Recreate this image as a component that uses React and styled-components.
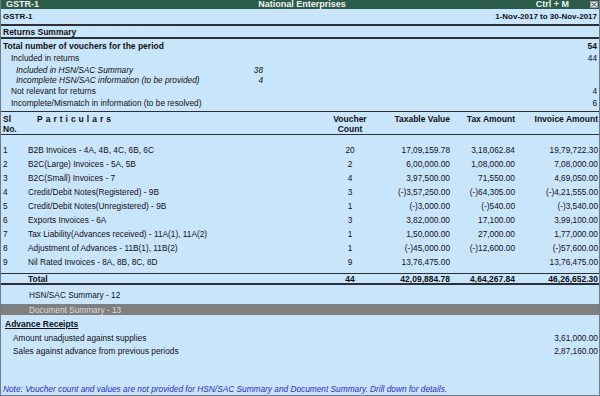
import React from "react";
import styled, { createGlobalStyle } from "styled-components";

const GlobalStyle = createGlobalStyle`
  html, body { margin: 0; padding: 0; background: #c9e5fb; }
  body { font-family: "Liberation Sans", Arial, sans-serif; color: #111; }
  * { box-sizing: border-box; }
`;

const Window = styled.div`
  width: 600px;
  height: 396px;
  display: flex;
  flex-direction: column;
  background: #c9e5fb;
  border-left: 1px solid #6d7b86;
  border-right: 1px solid #6d7b86;
  border-bottom: 1px solid #6d7b86;
  overflow: hidden;
`;

const TitleBar = styled.div`
  height: 9px;
  background: #2b5b49;
  color: #f2f2f2;
  font-weight: bold;
  font-size: 9px;
  line-height: 9px;
  display: grid;
  grid-template-columns: 1fr auto 1fr;
  padding: 0 2px 0 6px;
  margin: 0 -1px;
`;

const TitleRight = styled.div`
  display: flex;
  justify-content: flex-end;
  align-items: center;
  gap: 21px;
`;

const CloseBox = styled.span`
  width: 8px;
  height: 7px;
  background: #dfe3e6;
  border: 1px solid #9aa3a8;
  display: flex;
  align-items: center;
  justify-content: center;
`;

const ReportHead = styled.div`
  height: 17px;
  display: flex;
  justify-content: space-between;
  align-items: center;
  padding: 0 2px;
  font-weight: bold;
  font-size: 8px;
  border-bottom: 2px solid #2d3135;
`;

const SectionTitle = styled.div`
  height: 13px;
  display: flex;
  align-items: center;
  padding: 0 2px;
  font-weight: bold;
  font-size: 8.5px;
  border-bottom: 2px solid #2d3135;
`;

const SummaryBlock = styled.div`
  padding: 0 2px 2px 2px;
  border-bottom: 1px solid #2d3135;
`;

const SumRow = styled.div`
  height: ${(p) => p.$h || 12}px;
  display: grid;
  grid-template-columns: ${(p) => p.$indent || 0}px ${(p) => 260 - (p.$indent || 0)}px 1fr;
  align-items: center;
  font-size: ${(p) => (p.$bold ? "8.5px" : "8.3px")};
  font-weight: ${(p) => (p.$bold ? "bold" : "normal")};
  font-style: ${(p) => (p.$italic ? "italic" : "normal")};
`;

const SumLabel = styled.span`
  grid-column: 2;
  grid-row: 1;
  white-space: nowrap;
`;

const MidValue = styled.span`
  grid-column: 2;
  grid-row: 1;
  justify-self: end;
`;

const EndValue = styled.span`
  grid-column: 3;
  grid-row: 1;
  text-align: right;
`;

const Grid = styled.div`
  display: grid;
  grid-template-columns: 25px 1fr 38px 81px 65px 83px;
  padding: 0 1px 0 2px;
  align-items: center;
`;

const HeaderGrid = styled(Grid)`
  height: 23px;
  align-items: start;
  padding-top: 2px;
  font-weight: bold;
  font-size: 8.5px;
  line-height: 10px;
  border-bottom: 1px solid #2d3135;
`;

const Particulars = styled.span`
  padding-left: 9px;
  letter-spacing: 3px;
`;

const Center = styled.span`
  text-align: center;
`;

const Right = styled.span`
  text-align: right;
  white-space: nowrap;
`;

const Body = styled.div`
  padding: 8px 0 4px;
`;

const DataRow = styled(Grid)`
  height: 14px;
  font-size: 8.3px;
`;

const TotalRow = styled(Grid)`
  height: 12px;
  font-size: 8.5px;
  font-weight: bold;
  border-top: 1px solid #2d3135;
  border-bottom: 2px solid #2d3135;
`;

const PlainRow = styled.div`
  height: ${(p) => p.$h || 14}px;
  display: flex;
  align-items: center;
  padding-left: 28px;
  font-size: 8.3px;
`;

const HighlightRow = styled(PlainRow)`
  background: #7f7f7f;
  color: #dcdcdc;
  margin-bottom: 2px;
`;

const AdvanceTitle = styled.div`
  height: 14px;
  display: flex;
  align-items: center;
  padding-left: 4px;
  font-size: 8.5px;
  font-weight: bold;
  text-decoration: underline;
`;

const AdvRow = styled.div`
  height: 13px;
  display: flex;
  justify-content: space-between;
  align-items: center;
  padding: 0 1px 0 12px;
  font-size: 8.3px;
`;

const Spacer = styled.div`
  flex: 1;
`;

const Note = styled.div`
  height: 12px;
  padding-left: 2px;
  font-size: 8.3px;
  font-style: italic;
  color: #2a2ae0;
  display: flex;
  align-items: center;
`;

const rows = [
  ["1", "B2B Invoices - 4A, 4B, 4C, 6B, 6C", "20", "17,09,159.78", "3,18,062.84", "19,79,722.30"],
  ["2", "B2C(Large) Invoices - 5A, 5B", "2", "6,00,000.00", "1,08,000.00", "7,08,000.00"],
  ["3", "B2C(Small) Invoices - 7", "4", "3,97,500.00", "71,550.00", "4,69,050.00"],
  ["4", "Credit/Debit Notes(Registered) - 9B", "3", "(-)3,57,250.00", "(-)64,305.00", "(-)4,21,555.00"],
  ["5", "Credit/Debit Notes(Unregistered) - 9B", "1", "(-)3,000.00", "(-)540.00", "(-)3,540.00"],
  ["6", "Exports Invoices - 6A", "3", "3,82,000.00", "17,100.00", "3,99,100.00"],
  ["7", "Tax Liability(Advances received) - 11A(1), 11A(2)", "1", "1,50,000.00", "27,000.00", "1,77,000.00"],
  ["8", "Adjustment of Advances - 11B(1), 11B(2)", "1", "(-)45,000.00", "(-)12,600.00", "(-)57,600.00"],
  ["9", "Nil Rated Invoices - 8A, 8B, 8C, 8D", "9", "13,76,475.00", "", "13,76,475.00"],
];

export default function App() {
  return (
    <>
      <GlobalStyle />
      <Window>
        <TitleBar>
          <span>GSTR-1</span>
          <span>National Enterprises</span>
          <TitleRight>
            <span>Ctrl + M</span>
            <CloseBox>
              <svg width="6" height="5" viewBox="0 0 6 5">
                <path d="M0.5 0.5 L5.5 4.5 M5.5 0.5 L0.5 4.5" stroke="#555" strokeWidth="1" />
              </svg>
            </CloseBox>
          </TitleRight>
        </TitleBar>

        <ReportHead>
          <span>GSTR-1</span>
          <span>1-Nov-2017 to 30-Nov-2017</span>
        </ReportHead>

        <SectionTitle>Returns Summary</SectionTitle>

        <SummaryBlock>
          <SumRow $bold $h={13}>
            <SumLabel>Total number of vouchers for the period</SumLabel>
            <EndValue>54</EndValue>
          </SumRow>
          <SumRow $indent={8}>
            <SumLabel>Included in returns</SumLabel>
            <EndValue>44</EndValue>
          </SumRow>
          <SumRow $indent={13} $italic $h={11}>
            <SumLabel>Included in HSN/SAC Summary</SumLabel>
            <MidValue>38</MidValue>
          </SumRow>
          <SumRow $indent={13} $italic $h={10}>
            <SumLabel>Incomplete HSN/SAC information (to be provided)</SumLabel>
            <MidValue>4</MidValue>
          </SumRow>
          <SumRow $indent={8}>
            <SumLabel>Not relevant for returns</SumLabel>
            <EndValue>4</EndValue>
          </SumRow>
          <SumRow $indent={8}>
            <SumLabel>Incomplete/Mismatch in information (to be resolved)</SumLabel>
            <EndValue>6</EndValue>
          </SumRow>
        </SummaryBlock>

        <HeaderGrid>
          <span>Sl<br />No.</span>
          <Particulars>Particulars</Particulars>
          <Center>Voucher<br />Count</Center>
          <Right>Taxable Value</Right>
          <Right>Tax Amount</Right>
          <Right>Invoice Amount</Right>
        </HeaderGrid>

        <Body>
          {rows.map((r) => (
            <DataRow key={r[0]}>
              <span>{r[0]}</span>
              <span>{r[1]}</span>
              <Center>{r[2]}</Center>
              <Right>{r[3]}</Right>
              <Right>{r[4]}</Right>
              <Right>{r[5]}</Right>
            </DataRow>
          ))}
        </Body>

        <TotalRow>
          <span />
          <span>Total</span>
          <Center>44</Center>
          <Right>42,09,884.78</Right>
          <Right>4,64,267.84</Right>
          <Right>46,26,652.30</Right>
        </TotalRow>

        <PlainRow $h={19}>HSN/SAC Summary - 12</PlainRow>
        <HighlightRow $h={11}>Document Summary - 13</HighlightRow>

        <AdvanceTitle>Advance Receipts</AdvanceTitle>
        <AdvRow>
          <span>Amount unadjusted against supplies</span>
          <span>3,61,000.00</span>
        </AdvRow>
        <AdvRow>
          <span>Sales against advance from previous periods</span>
          <span>2,87,160.00</span>
        </AdvRow>

        <Spacer />
        <Note>
          Note: Voucher count and values are not provided for HSN/SAC Summary and Document Summary. Drill down for details.
        </Note>
      </Window>
    </>
  );
}
